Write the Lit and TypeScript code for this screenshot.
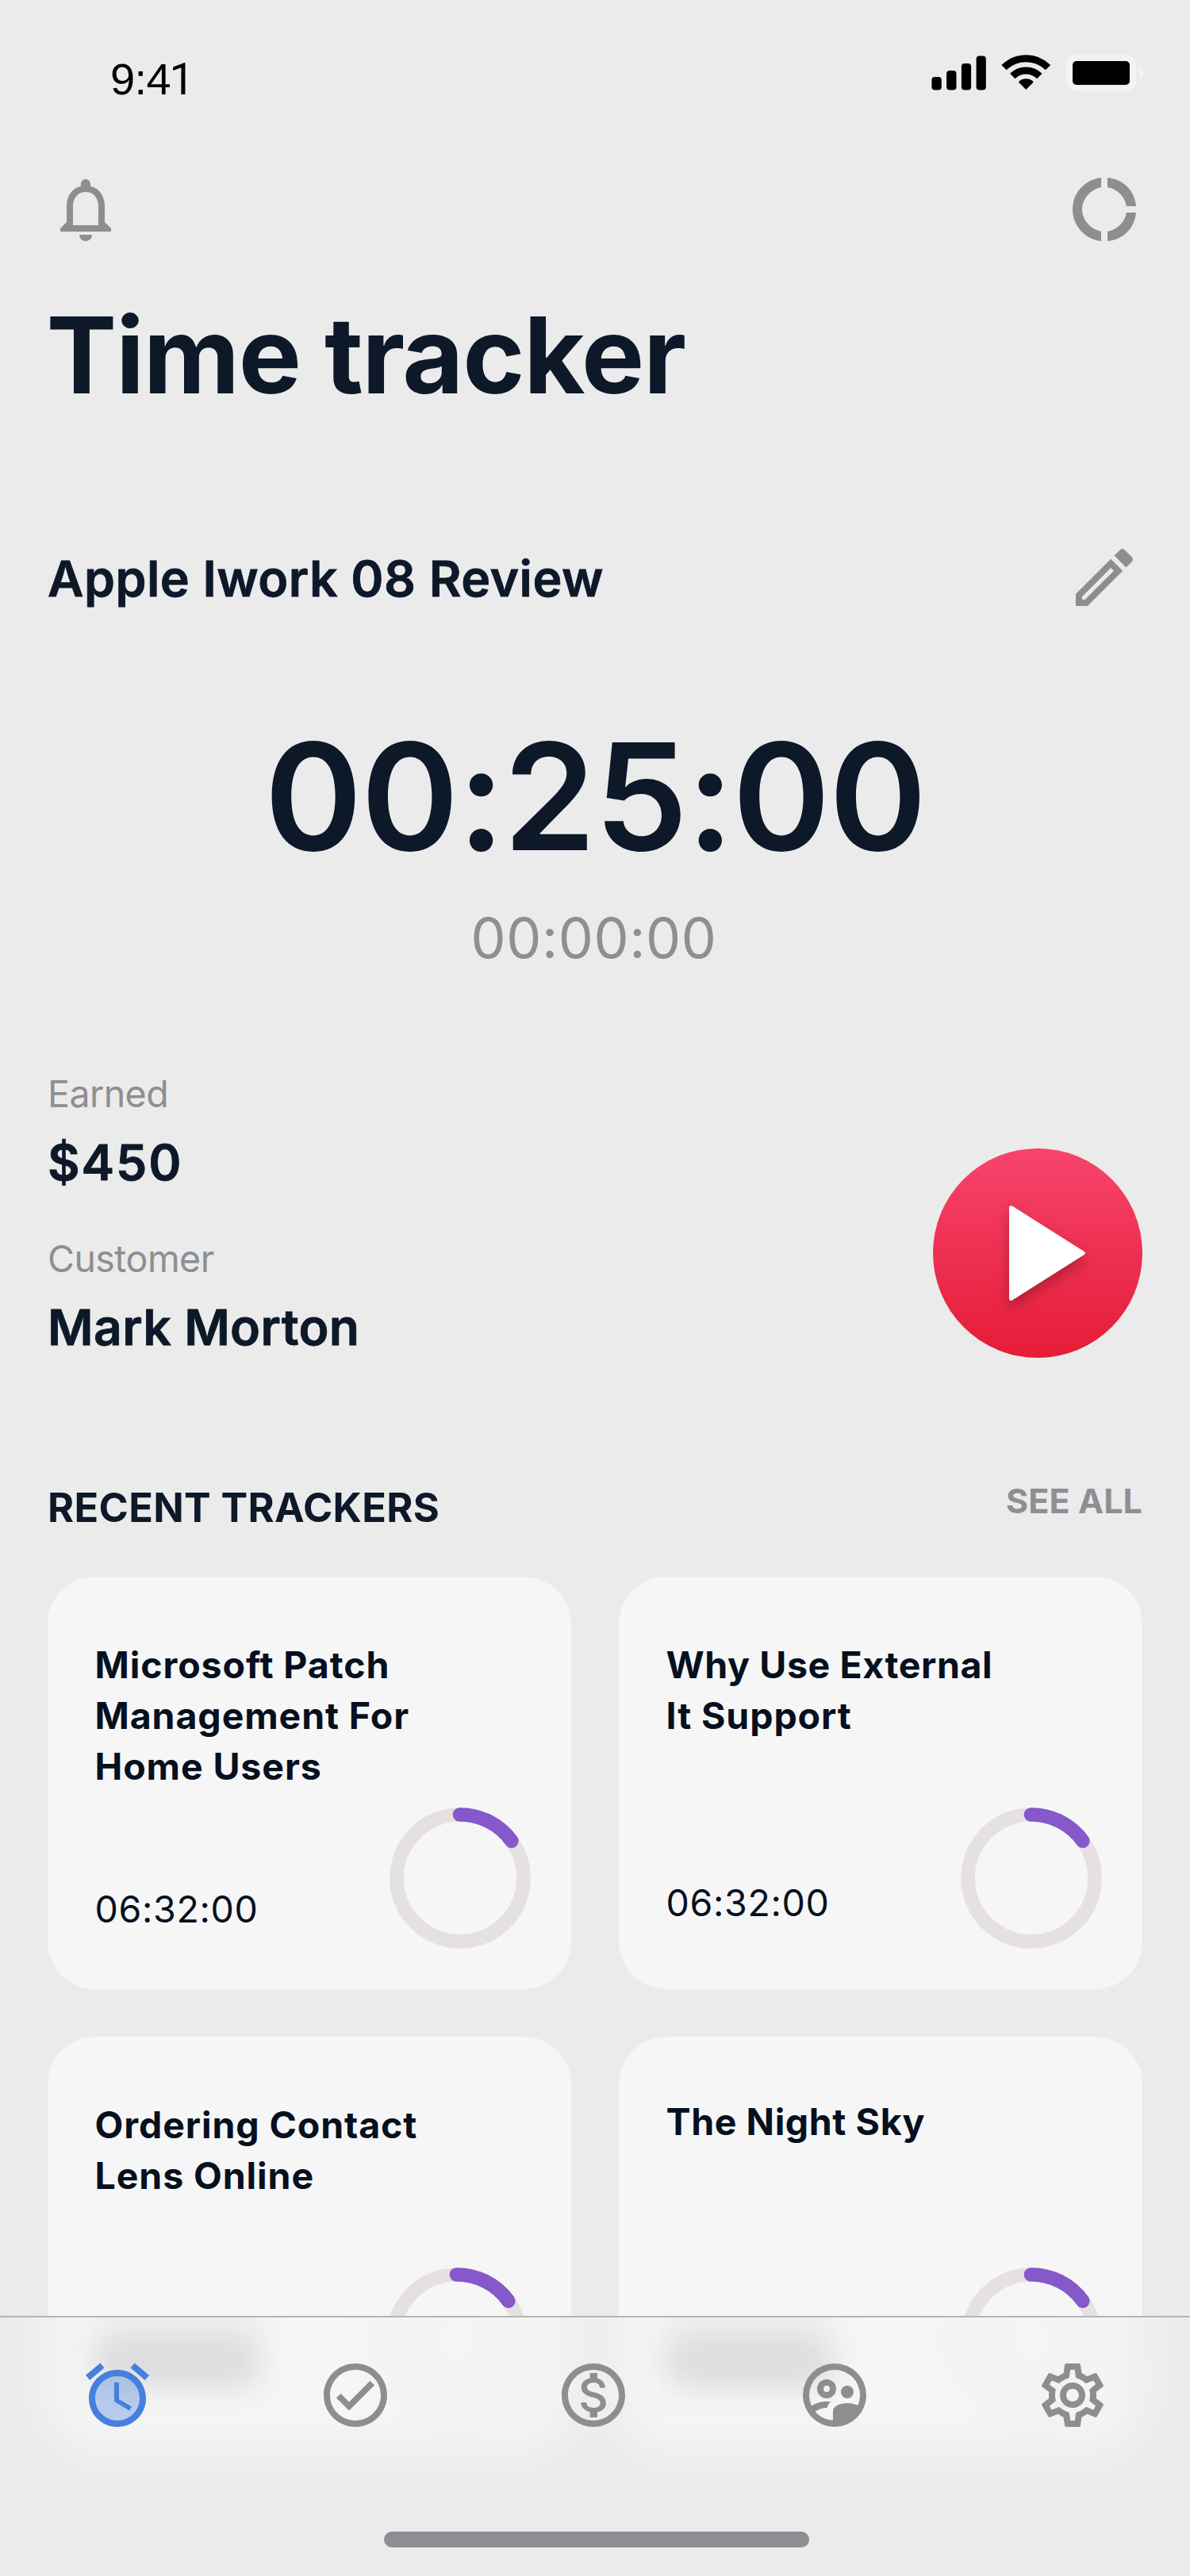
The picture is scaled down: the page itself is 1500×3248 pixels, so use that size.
import { LitElement, html, css, svg } from "lit";
import { customElement, property } from "lit/decorators.js";
import { classMap } from "lit/directives/class-map.js";

const icons = {
  bell: svg`<path d="M12 22c1.1 0 2-.9 2-2h-4c0 1.1.9 2 2 2zm6-6v-5c0-3.07-1.63-5.64-4.5-6.32V4c0-.83-.67-1.5-1.5-1.5s-1.5.67-1.5 1.5v.68C7.64 5.36 6 7.92 6 11v5l-2 2v1h16v-1l-2-2zm-2 1H8v-6c0-2.48 1.51-4.5 4-4.5s4 2.02 4 4.5v6z"/>`,
  donut: svg`<path d="M11 5.08V2c-5 .5-9 4.81-9 10s4 9.5 9 10v-3.08c-3-.48-6-3.4-6-6.92s3-6.44 6-6.92zM18.97 11H22c-.47-5-4-8.53-9-9v3.08C16 5.51 18.54 8 18.97 11zM13 18.92V22c5-.47 8.53-4 9-9h-3.03c-.43 3-2.97 5.49-5.97 5.92z"/>`,
  edit: svg`<path d="M14.06 9.02l.92.92L5.92 19H5v-.92l9.06-9.06M17.66 3c-.25 0-.51.1-.7.29l-1.83 1.83 3.75 3.75 1.83-1.83c.39-.39.39-1.02 0-1.41l-2.34-2.34c-.2-.2-.45-.29-.71-.29zm-3.6 3.19L3 17.25V21h3.75L17.81 9.94l-3.75-3.75z"/>`,
  alarm: svg`<circle cx="12" cy="13" r="7.5" opacity=".35"/><path d="M22 5.72l-4.6-3.86-1.29 1.53 4.6 3.86L22 5.72zM7.88 3.39L6.6 1.86 2 5.71l1.29 1.53 4.59-3.85zM12.5 8H11v6l4.75 2.85.75-1.23-4-2.37V8zM12 4c-4.97 0-9 4.03-9 9s4.02 9 9 9c4.97 0 9-4.03 9-9s-4.03-9-9-9zm0 16c-3.87 0-7-3.13-7-7s3.13-7 7-7 7 3.13 7 7-3.13 7-7 7z"/>`,
  check: svg`<path d="M12 2C6.48 2 2 6.48 2 12s4.48 10 10 10 10-4.48 10-10S17.52 2 12 2zm0 18c-4.41 0-8-3.59-8-8s3.59-8 8-8 8 3.59 8 8-3.59 8-8 8z"/><path d="M16.6 7.5L10 14.1l-2.6-2.6L6 12.9l4 4 8-8z"/>`,
  money: svg`<path d="M12 2C6.48 2 2 6.48 2 12s4.48 10 10 10 10-4.48 10-10S17.52 2 12 2zm0 18c-4.41 0-8-3.59-8-8s3.59-8 8-8 8 3.59 8 8-3.59 8-8 8zm.31-8.86c-1.77-.45-2.34-.94-2.34-1.67 0-.84.79-1.43 2.1-1.43 1.38 0 1.9.66 1.94 1.64h1.71c-.05-1.34-.87-2.57-2.49-2.97V5H10.9v1.69c-1.51.32-2.72 1.3-2.72 2.81 0 1.79 1.49 2.69 3.66 3.21 1.95.46 2.34 1.15 2.34 1.87 0 .53-.39 1.39-2.1 1.39-1.6 0-2.23-.72-2.32-1.64H8.04c.1 1.7 1.36 2.66 2.86 2.97V19h2.34v-1.67c1.52-.29 2.72-1.16 2.73-2.77-.01-2.2-1.9-2.96-3.66-3.42z"/>`,
  people: svg`<path fill-rule="evenodd" d="M12 2a10 10 0 1 0 0 20 10 10 0 0 0 0-20zm0 2a8 8 0 1 1 0 16 8 8 0 0 1 0-16z"/><path fill-rule="evenodd" d="M9.5 7a3 3 0 1 0 0 6 3 3 0 0 0 0-6zm0 2a1 1 0 1 1 0 2 1 1 0 0 1 0-2z"/><circle cx="16" cy="11" r="2"/><path d="M4.3 15.7C5.7 14.6 7.5 14 9.5 14c.45 0 .9.03 1.33.08-.6.5-1 1.1-1.2 1.92-1.4 0-2.6.45-4.1 1.4z"/><path d="M11.5 21v-4c0-1.6 2.3-2.5 4.5-2.5 1.3 0 2.6.3 3.7.9l.3 1.6A9 9 0 0 1 11.5 21z"/>`,
  gear: svg`<path d="M19.43 12.98c.04-.32.07-.64.07-.98 0-.34-.03-.66-.07-.98l2.11-1.65c.19-.15.24-.42.12-.64l-2-3.46c-.09-.16-.26-.25-.44-.25-.06 0-.12.01-.17.03l-2.49 1c-.52-.4-1.08-.73-1.69-.98l-.38-2.65C14.46 2.18 14.25 2 14 2h-4c-.25 0-.46.18-.49.42l-.38 2.65c-.61.25-1.17.59-1.69.98l-2.49-1c-.06-.02-.12-.03-.18-.03-.17 0-.34.09-.43.25l-2 3.46c-.13.22-.07.49.12.64l2.11 1.65c-.04.32-.07.65-.07.98 0 .33.03.66.07.98l-2.11 1.65c-.19.15-.24.42-.12.64l2 3.46c.09.16.26.25.44.25.06 0 .12-.01.17-.03l2.49-1c.52.4 1.08.73 1.69.98l.38 2.65c.03.24.24.42.49.42h4c.25 0 .46-.18.49-.42l.38-2.65c.61-.25 1.17-.59 1.69-.98l2.49 1c.06.02.12.03.18.03.17 0 .34-.09.43-.25l2-3.46c.12-.22.07-.49-.12-.64l-2.11-1.65zm-1.98-1.71c.04.31.05.52.05.73 0 .21-.02.43-.05.73l-.14 1.13.89.7 1.08.84-.7 1.21-1.27-.51-1.04-.42-.9.68c-.43.32-.84.56-1.25.73l-1.06.43-.16 1.13-.2 1.35h-1.4l-.19-1.35-.16-1.13-1.06-.43c-.43-.18-.83-.41-1.23-.71l-.91-.7-1.06.43-1.27.51-.7-1.21 1.08-.84.89-.7-.14-1.13c-.03-.31-.05-.54-.05-.74s.02-.43.05-.73l.14-1.13-.89-.7-1.08-.84.7-1.21 1.27.51 1.04.42.9-.68c.43-.32.84-.56 1.25-.73l1.06-.43.16-1.13.2-1.35h1.39l.19 1.35.16 1.13 1.06.43c.43.18.83.41 1.23.71l.91.7 1.06-.43 1.27-.51.7 1.21-1.07.85-.89.7.14 1.13zM12 8c-2.21 0-4 1.79-4 4s1.79 4 4 4 4-1.79 4-4-1.79-4-4-4zm0 6c-1.1 0-2-.9-2-2s.9-2 2-2 2 .9 2 2-.9 2-2 2z"/>`,
};
type IconName = keyof typeof icons;

interface Tracker {
  lines: string[];
  time: string;
  single?: boolean;
  tight?: boolean;
  raised?: boolean;
  inset?: boolean;
}

const trackers: Tracker[] = [
  { lines: ["Microsoft Patch", "Management For", "Home Users"], time: "06:32:00" },
  { lines: ["Why Use External", "It Support"], time: "06:32:00", tight: true, raised: true },
  { lines: ["Ordering Contact", "Lens Online"], time: "", raised: true, inset: true },
  { lines: ["The Night Sky"], time: "", single: true, tight: true, raised: true },
];

const tabs: { icon: IconName; active?: boolean }[] = [
  { icon: "alarm", active: true },
  { icon: "check" },
  { icon: "money" },
  { icon: "people" },
  { icon: "gear" },
];

@customElement("app-icon")
export class AppIcon extends LitElement {
  @property() name: IconName = "bell";

  static styles = css`
    :host {
      display: block;
      width: 96px;
      height: 96px;
      flex: none;
    }
    .glyph {
      display: block;
      width: 100%;
      height: 100%;
      fill: currentColor;
    }
  `;

  render() {
    return html`<svg class="glyph" viewBox="0 0 24 24">${icons[this.name]}</svg>`;
  }
}

@customElement("status-bar")
export class StatusBar extends LitElement {
  static styles = css`
    :host {
      display: flex;
      justify-content: space-between;
      align-items: flex-start;
      box-sizing: border-box;
      height: 216px;
      padding: 69px 58px 0 139px;
      color: #000;
    }
    .time {
      font: 400 56px/62px "Liberation Sans", Arial, sans-serif;
      letter-spacing: -0.6px;
    }
    .last {
      font-family: Roboto, sans-serif;
      margin-left: -1.5px;
    }
    .signs {
      display: block;
      width: 268px;
      height: 46px;
    }
  `;

  render() {
    return html`
      <span class="time">9:4<span class="last">1</span></span>
      <svg class="signs" viewBox="0 0 268 46">
        <rect x="0.4" y="28" width="12.4" height="16.4" rx="4" />
        <rect x="19.1" y="20" width="12.4" height="24.4" rx="4" />
        <rect x="37.9" y="11" width="12.2" height="33.4" rx="4" />
        <rect x="56.6" y="1.4" width="12.2" height="43" rx="4" />
        <g fill="none" stroke="#000">
          <path d="M91.5 16.2A39.3 39.3 0 0 1 147.1 16.2" stroke-width="8.9" />
          <path d="M102.3 27A24.1 24.1 0 0 1 136.3 27" stroke-width="9.2" />
        </g>
        <path
          d="M119.3 44L110.5 35.2Q109.6 34.3 110.6 33.5A13.4 13.4 0 0 1 128 33.5Q129 34.3 128.1 35.2Z"
        />
        <rect x="174" y="4" width="80" height="38" rx="9" fill="none" stroke="#f3f3f3" stroke-width="8" />
        <rect x="178" y="8" width="72" height="30" rx="5" />
        <path d="M262 15C268.8 18 268.8 28 262 31Z" fill="#f3f3f3" />
      </svg>
    `;
  }
}

@customElement("tracker-card")
export class TrackerCard extends LitElement {
  @property({ attribute: false }) tracker!: Tracker;

  static styles = css`
    :host {
      display: block;
    }
    .card {
      display: flex;
      flex-direction: column;
      justify-content: space-between;
      box-sizing: border-box;
      height: 520px;
      padding: 79px 50px 50px 59.5px;
      border-radius: 60px;
      background: #f6f6f6;
      color: #06101e;
      font-size: 46.5px;
      line-height: 64px;
    }
    .card.single {
      padding-top: 75px;
    }
    .card.inset {
      padding-right: 54px;
    }
    .title {
      margin: 0;
      font-size: inherit;
      font-weight: 700;
      letter-spacing: 0.9px;
    }
    .line {
      display: block;
      white-space: nowrap;
    }
    .tight .line:first-child {
      letter-spacing: 0.6px;
    }
    .foot {
      display: flex;
      justify-content: space-between;
      align-items: flex-end;
    }
    .time {
      letter-spacing: 0.65px;
      padding-bottom: 19px;
    }
    .raised .time {
      padding-bottom: 27px;
    }
    .ring {
      display: block;
      width: 180px;
      height: 180px;
      fill: none;
      stroke-width: 17.7;
      stroke-linecap: round;
    }
  `;

  render() {
    const { lines, time, single = false, tight = false, raised = false, inset = false } = this.tracker;
    return html`
      <article class=${classMap({ card: true, single, tight, raised, inset })}>
        <h3 class="title">${lines.map((l) => html`<span class="line">${l}</span>`)}</h3>
        <div class="foot">
          <span class="time">${time}</span>
          <svg class="ring" viewBox="0 0 180 180">
            <circle cx="90" cy="90" r="80" stroke="#e5e1e0" />
            <path d="M89.5 10A80 80 0 0 1 154.8 43.2" stroke="#8558cb" />
          </svg>
        </div>
      </article>
    `;
  }
}

@customElement("tab-bar")
export class TabBar extends LitElement {
  static styles = css`
    :host {
      display: flex;
      flex-direction: column;
      align-items: center;
      box-sizing: border-box;
      height: 328px;
      overflow: hidden;
      border-top: 2px solid #b3b4b3;
      padding-top: 50px;
      background: #ebebeb;
    }
    /* Frosted glass: soft shapes of the cards that continue below the bar. */
    .frost {
      position: absolute;
      top: 0;
      left: 0;
      width: 1500px;
      height: 326px;
    }
    .tabs {
      position: relative;
      display: flex;
      align-self: stretch;
      gap: 204px;
      padding-left: 100px;
      color: #8e8e8e;
    }
    .tab:nth-child(4) {
      margin-left: 4px;
    }
    .active {
      color: #467fdd;
    }
    .home {
      position: relative;
      width: 536px;
      height: 20px;
      margin-top: 124px;
      margin-left: 4px;
      border-radius: 10px;
      background: #8e8d93;
    }
  `;

  render() {
    return html`
      <svg class="frost" viewBox="0 0 1500 326">
        <defs>
          <filter id="soft" filterUnits="userSpaceOnUse" x="-200" y="-300" width="1900" height="800" color-interpolation-filters="sRGB">
            <feGaussianBlur stdDeviation="34" />
          </filter>
          <filter id="ink" filterUnits="userSpaceOnUse" x="-200" y="-300" width="1900" height="800" color-interpolation-filters="sRGB">
            <feGaussianBlur stdDeviation="22 26" />
          </filter>
        </defs>
        <g filter="url(#soft)">
          <rect x="60" y="-200" width="660" height="366" rx="60" fill="#f6f6f6" />
          <rect x="780" y="-200" width="660" height="366" rx="60" fill="#f6f6f6" />
          <g fill="none" stroke="#e9e7e7" stroke-width="18">
            <circle cx="575.6" cy="26" r="80" />
            <circle cx="1299.6" cy="26" r="80" />
          </g>
        </g>
        <g filter="url(#ink)" fill="#182030">
          <g opacity=".21">
            <rect x="120" y="36" width="206" height="38" />
            <rect x="841" y="36" width="206" height="38" />
          </g>
          <g opacity=".06">
            <rect x="120" y="-24" width="206" height="30" />
            <rect x="841" y="-24" width="206" height="30" />
          </g>
        </g>
      </svg>
      <nav class="tabs">
        ${tabs.map(
          (t) => html`<app-icon class=${classMap({ tab: true, active: !!t.active })} name=${t.icon}></app-icon>`,
        )}
      </nav>
      <div class="home"></div>
    `;
  }
}

@customElement("app-root")
export class AppRoot extends LitElement {
  static styles = css`
    :host {
      display: block;
      position: relative;
      width: 1500px;
      height: 3248px;
      overflow: hidden;
      background: #ebebeb;
      color: #0d1829;
      font-family: Inter, sans-serif;
    }
    .content {
      padding: 0 60px;
    }
    .tools {
      display: flex;
      justify-content: space-between;
      color: #8e8e8e;
    }
    .heading {
      margin: 56px 0 0 -1.5px;
      font-size: 133px;
      font-weight: 700;
      line-height: 160px;
      letter-spacing: -1.3px;
    }
    .task {
      display: flex;
      justify-content: space-between;
      align-items: center;
      margin-top: 152px;
    }
    .task-name {
      margin: 0;
      padding-top: 3px;
      font-size: 62.5px;
      font-weight: 600;
      line-height: 93px;
      letter-spacing: 0.48px;
      -webkit-text-stroke: 0.8px currentColor;
    }
    .edit {
      color: #8e8e8e;
    }
    .clock {
      margin-top: 128px;
      text-align: center;
      font-size: 187px;
      font-weight: 600;
      line-height: 200px;
      letter-spacing: -1.66px;
    }
    .elapsed {
      margin-top: 34px;
      padding-right: 3px;
      text-align: center;
      font-size: 70px;
      line-height: 90px;
      letter-spacing: 0.6px;
      color: #8e8e93;
    }
    .summary {
      display: flex;
      justify-content: space-between;
      align-items: flex-end;
      margin-top: 121px;
    }
    .facts {
      display: flex;
      flex-direction: column;
      gap: 52px;
    }
    .label {
      font-size: 46.5px;
      line-height: 60px;
      letter-spacing: -0.55px;
      color: #8e8e93;
    }
    .value {
      margin-top: 16px;
      font-size: 62.5px;
      font-weight: 600;
      line-height: 80px;
      letter-spacing: 0.3px;
      -webkit-text-stroke: 0.8px currentColor;
    }
    .amount {
      letter-spacing: 1.9px;
    }
    .play {
      display: block;
      width: 264px;
      height: 264px;
      margin-bottom: 1px;
      border-radius: 50%;
      background: linear-gradient(#f7446c, #e51c37);
    }
    .arrow {
      fill: #fff;
      stroke: #fff;
      stroke-width: 5;
      stroke-linejoin: round;
      filter: drop-shadow(0 8px 8px rgba(0, 0, 0, 0.25));
    }
    .section {
      display: flex;
      justify-content: space-between;
      align-items: flex-start;
      margin-top: 149px;
      line-height: 60px;
    }
    .section-name {
      margin: 9px 0 0;
      font-size: 50.5px;
      font-weight: 700;
      letter-spacing: 0.34px;
    }
    .all {
      font-size: 43px;
      font-weight: 700;
      letter-spacing: 0.1px;
      color: #8e8e93;
    }
    .grid {
      display: grid;
      grid-template-columns: 1fr 1fr;
      gap: 60px;
      margin-top: 57px;
    }
    .bar {
      position: absolute;
      left: 0;
      right: 0;
      bottom: 0;
    }
  `;

  render() {
    return html`
      <status-bar></status-bar>
      <main class="content">
        <div class="tools">
          <app-icon name="bell"></app-icon>
          <app-icon name="donut"></app-icon>
        </div>
        <h1 class="heading">Time tracker</h1>
        <div class="task">
          <h2 class="task-name">Apple Iwork 08 Review</h2>
          <app-icon class="edit" name="edit"></app-icon>
        </div>
        <div class="clock">00:25:00</div>
        <div class="elapsed">00:00:00</div>
        <div class="summary">
          <div class="facts">
            <div>
              <div class="label">Earned</div>
              <div class="value amount">$450</div>
            </div>
            <div>
              <div class="label">Customer</div>
              <div class="value">Mark Morton</div>
            </div>
          </div>
          <svg class="play" viewBox="0 0 264 264">
            <path class="arrow" d="M98.5 74.7L189.3 132L98.5 189.3Z" />
          </svg>
        </div>
        <div class="section">
          <h2 class="section-name">RECENT TRACKERS</h2>
          <span class="all">SEE ALL</span>
        </div>
        <div class="grid">
          ${trackers.map((t) => html`<tracker-card .tracker=${t}></tracker-card>`)}
        </div>
      </main>
      <tab-bar class="bar"></tab-bar>
    `;
  }
}
